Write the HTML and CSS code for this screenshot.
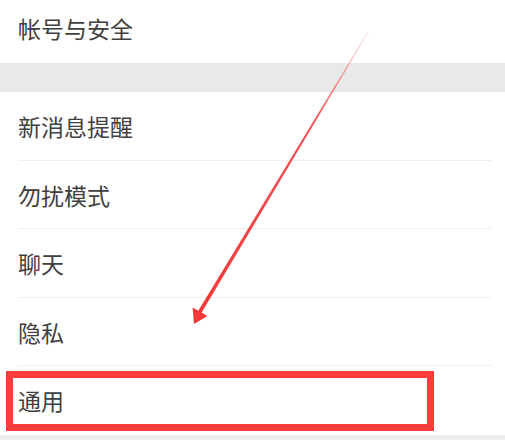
FILE: index.html
```html
<!DOCTYPE html>
<html lang="zh-CN">
<head>
<meta charset="utf-8">
<link rel="stylesheet" href="styles.css">
</head>
<body>
<div class="page">
  <div class="row top">帐号与安全</div>
  <div class="band"></div>
  <div class="list">
    <div class="row item tall">新消息提醒</div>
    <div class="row item">勿扰模式</div>
    <div class="row item tall">聊天</div>
    <div class="row item">隐私</div>
    <div class="row last">通用<div class="mark"></div></div>
  </div>
  <div class="band bottom"></div>
  <svg class="arrow" width="505" height="440" viewBox="0 0 505 440">
    <defs>
      <linearGradient id="g" x1="368" y1="32" x2="196" y2="320" gradientUnits="userSpaceOnUse">
        <stop offset="0" stop-color="#ff4a55" stop-opacity="0.15"/>
        <stop offset="0.3" stop-color="#f43c42" stop-opacity="0.9"/>
        <stop offset="1" stop-color="#f43838"/>
      </linearGradient>
    </defs>
    <polygon points="367.6,32 368.4,32.4 200.8,314 197.2,312.5" fill="url(#g)"/>
    <polygon points="194,324 192.6,307.5 207.5,316" fill="#f43838"/>
  </svg>
</div>
</body>
</html>
```
FILE: styles.css
```css
html, body {
  margin: 0;
  padding: 0;
  background: #ffffff;
}
.page {
  position: relative;
  width: 505px;
  height: 440px;
  overflow: hidden;
  font-family: "Noto Sans CJK SC", "Noto Sans", sans-serif;
  color: #404040;
}
.row {
  display: flex;
  align-items: center;
  padding-left: 18px;
  padding-bottom: 1px;
  box-sizing: border-box;
  font-size: 23px;
  position: relative;
}
.top {
  height: 63px;
  padding-bottom: 8px;
}
.band {
  height: 29px;
  background: #e9e9e9;
}
.list {
  display: flex;
  flex-direction: column;
}
.item {
  height: 68px;
}
.item.tall {
  height: 69px;
}
.item::after {
  content: "";
  position: absolute;
  left: 18px;
  right: 13px;
  bottom: 0;
  height: 1px;
  background: #efefef;
}
.last {
  height: 69px;
}
.bottom {
  height: 10px;
  background: #ececec;
}
.mark {
  position: absolute;
  left: 6px;
  top: 5px;
  width: 428px;
  height: 60px;
  box-sizing: border-box;
  border: 7px solid #ff3b3b;
}
.arrow {
  position: absolute;
  left: 0;
  top: 0;
  pointer-events: none;
}
```
